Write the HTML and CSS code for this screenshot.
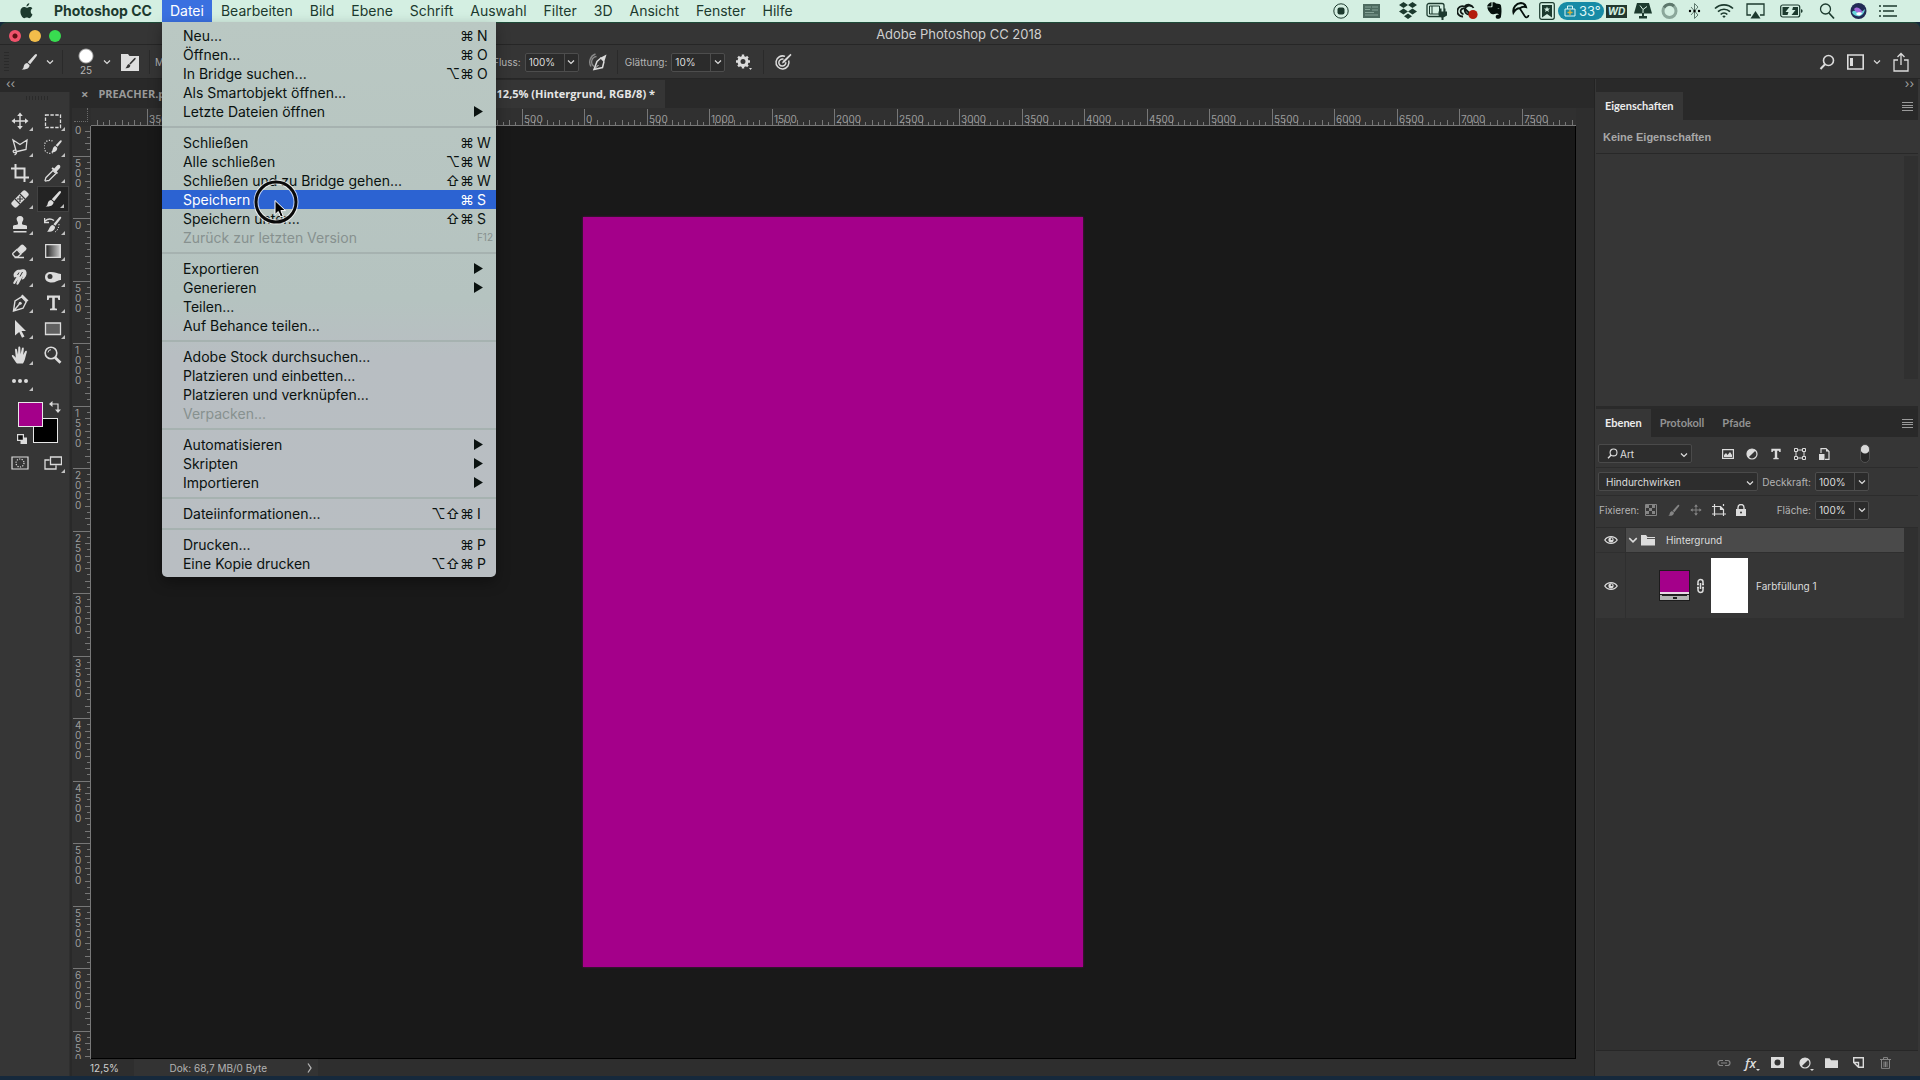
FILE: index.html
```html
<!DOCTYPE html>
<html lang="de">
<head>
    <meta charset="UTF-8">
    <meta name="viewport" content="width=device-width, initial-scale=1.0">
    <title>Adobe Photoshop CC 2018</title>
    <link rel="stylesheet" href="styles.css">
</head>
<body>
    <svg class="sprite" aria-hidden="true">
        <symbol id="chevron" viewBox="0 0 8 6"><path d="M1 1.5l3 3 3-3" fill="none" stroke="currentColor" stroke-width="1.2"/></symbol>
        <symbol id="brush" viewBox="0 0 18 18"><path d="M16.6 1.2c.7.6.4 1.4-.1 2.1l-6.300 8-2.400-2 6.900-7.500c.6-.6 1.300-1.100 1.900-.6zM7.200 10l2.300 1.900c.3 2.200-1.600 4.900-7.900 4.500 2.200-1 1.700-2 2.400-4 .5-1.500 1.800-2.400 3.200-2.400z" fill="currentColor"/></symbol>
        <symbol id="move" viewBox="0 0 18 18"><path d="M9 2v14M2 9h14" stroke="currentColor" stroke-width="1.4"/><path d="M9 .5l2.800 3.500H6.200zM9 17.500L6.200 14h5.600zM.5 9L4 6.200v5.600zM17.500 9L14 11.800V6.200z" fill="currentColor"/></symbol>
        <symbol id="eye" viewBox="0 0 14 10"><path d="M.8 5C3.500.6 10.500.6 13.200 5 10.500 9.400 3.500 9.400.8 5z" fill="none" stroke="currentColor" stroke-width="1.300"/><circle cx="7" cy="4.800" r="2.600" fill="currentColor"/><circle cx="7.600" cy="4.200" r=".9" fill="#333"/></symbol>
        <symbol id="folder" viewBox="0 0 14 12"><path d="M0 1h5l1.500 2H14v8.500H0z" fill="currentColor"/></symbol>
        <symbol id="menu" viewBox="0 0 11 9"><path d="M0 .5h11M0 3.500h11M0 5.500h11M0 8.500h11" stroke="currentColor"/></symbol>
        <symbol id="glass" viewBox="0 0 16 16"><circle cx="9.500" cy="6.500" r="5" fill="none" stroke="currentColor" stroke-width="1.600"/><path d="M6 10.200L1.500 15" stroke="currentColor" stroke-width="2"/></symbol>
        <symbol id="adjust" viewBox="0 0 12 12"><circle cx="6" cy="6" r="5" fill="none" stroke="currentColor" stroke-width="1.200"/><path d="M9.600 2.400A5 5 0 0 0 2.400 9.600z" fill="currentColor"/></symbol>
    </svg>

    <nav class="menubar">
        <a href="#" class="apple" aria-label="Apple"><svg width="13" height="16" viewBox="0 0 13 16"><path d="M9.300.3c.1 1.500-1.300 3.200-2.800 3.100C6.300 2 7.700.5 9.300.3zM12.500 11.600c-.7 1.700-1.900 3.600-3.200 3.600-1 0-1.300-.6-2.500-.6s-1.600.6-2.500.6C2.500 15.200.4 11.900.4 8.600c0-2.900 1.800-4.500 3.600-4.500 1.100 0 2 .7 2.700.7.700 0 1.800-.8 3.200-.8 1 0 1.900.5 2.500 1.300-2.400 1.500-2 5 .1 6.300z" fill="currentColor"/></svg></a>
        <a href="#" class="app-name">Photoshop CC</a>
        <div class="menu-wrap">
            <a href="#" class="active">Datei</a>
            <ul class="dropdown">
                <li><a href="#">Neu...<kbd>⌘<b>N</b></kbd></a></li>
                <li><a href="#">Öffnen...<kbd>⌘<b>O</b></kbd></a></li>
                <li><a href="#">In Bridge suchen...<kbd>⌥⌘<b>O</b></kbd></a></li>
                <li><a href="#">Als Smartobjekt öffnen...</a></li>
                <li><a href="#" class="more">Letzte Dateien öffnen</a></li>
                <li class="line"></li>
                <li><a href="#">Schließen<kbd>⌘<b>W</b></kbd></a></li>
                <li><a href="#">Alle schließen<kbd>⌥⌘<b>W</b></kbd></a></li>
                <li><a href="#">Schließen und zu Bridge gehen...<kbd>⇧⌘<b>W</b></kbd></a></li>
                <li><a href="#" class="hover">Speichern<kbd>⌘<b>S</b></kbd></a></li>
                <li><a href="#">Speichern unter...<kbd>⇧⌘<b>S</b></kbd></a></li>
                <li><a href="#" class="off">Zurück zur letzten Version<kbd><b class="fkey">F12</b></kbd></a></li>
                <li class="line"></li>
                <li><a href="#" class="more">Exportieren</a></li>
                <li><a href="#" class="more">Generieren</a></li>
                <li><a href="#">Teilen...</a></li>
                <li><a href="#">Auf Behance teilen...</a></li>
                <li class="line"></li>
                <li><a href="#">Adobe Stock durchsuchen...</a></li>
                <li><a href="#">Platzieren und einbetten...</a></li>
                <li><a href="#">Platzieren und verknüpfen...</a></li>
                <li><a href="#" class="off">Verpacken...</a></li>
                <li class="line"></li>
                <li><a href="#" class="more">Automatisieren</a></li>
                <li><a href="#" class="more">Skripten</a></li>
                <li><a href="#" class="more">Importieren</a></li>
                <li class="line"></li>
                <li><a href="#">Dateiinformationen...<kbd>⌥⇧⌘<b>I</b></kbd></a></li>
                <li class="line"></li>
                <li><a href="#">Drucken...<kbd>⌘<b>P</b></kbd></a></li>
                <li><a href="#">Eine Kopie drucken<kbd>⌥⇧⌘<b>P</b></kbd></a></li>
            </ul>
            <svg class="cursor" width="46" height="46" viewBox="0 0 46 46"><circle cx="23" cy="23" r="20" fill="none" stroke="#fff" stroke-opacity=".7" stroke-width="5"/><circle cx="23" cy="23" r="20" fill="none" stroke="#0a0a0a" stroke-width="3"/><path d="M22 21.500v14l3.300-3 2.300 5.500 2.600-1.100-2.300-5.300h4.600z" fill="#000" stroke="#fff" stroke-width="1"/></svg>
        </div>
        <a href="#">Bearbeiten</a>
        <a href="#">Bild</a>
        <a href="#">Ebene</a>
        <a href="#">Schrift</a>
        <a href="#">Auswahl</a>
        <a href="#">Filter</a>
        <a href="#">3D</a>
        <a href="#">Ansicht</a>
        <a href="#">Fenster</a>
        <a href="#">Hilfe</a>
        <div class="status-icons">
            <svg width="16" height="16" viewBox="0 0 16 16"><circle cx="8" cy="8" r="7.200" fill="none" stroke="currentColor"/><rect x="4.500" y="4.500" width="7" height="7" rx="2" fill="currentColor"/></svg>
            <svg width="17" height="16" viewBox="0 0 17 16"><path d="M0 1h17v14H0z" fill="#4d6b60"/><path d="M2 4h6M2 6.500h5M9 4h6M9 7h6M2 9.500h9M2 12h13" stroke="#86a498" stroke-width="1"/></svg>
            <svg width="20" height="18" viewBox="0 0 20 18"><path d="M5.500 0L10 3 5.500 6 1 3zM14.500 0L19 3l-4.500 3L10 3zM5.500 6.400L10 9.400l-4.500 3L1 9.400zM14.500 6.400L19 9.400l-4.500 3-4.500-3zM10 11.500l4 2.700-4 2.800-4-2.800z" fill="currentColor"/></svg>
            <svg width="22" height="18" viewBox="0 0 22 18"><rect x="1" y="1.500" width="17" height="13" rx="2" fill="none" stroke="currentColor" stroke-width="1.300"/><path d="M3.500 4h10v8h-10zM6 4v8" fill="none" stroke="currentColor"/><path d="M14 6.500v3h-1.500v4l3 2v2.500h2v-2.500l3.500-2v-4h-1.500v-3h-1.500v3h-2.500v-3z" fill="currentColor"/></svg>
            <svg width="22" height="18" viewBox="0 0 22 18"><path d="M6 14.500a5.200 5.200 0 1 1 1.500-10A5.500 5.500 0 0 1 16.500 6M6.500 12a2.800 2.800 0 1 1 1.700-5l5 5M13 12.500a4.500 4.500 0 1 1 2-8" fill="none" stroke="#101a16" stroke-width="1.800"/><circle cx="16" cy="12.500" r="4.600" fill="#b31d0c"/></svg>
            <svg width="15" height="18" viewBox="0 0 15 18"><path d="M4.500 0v3.500c0 .7-.4 1-1 1H0C.5 2.500 2.500.5 4.500 0zM5.500.2c2 0 3 .4 3.500 1.300 2.500.2 4.600.2 5 2 .8 4 .6 8-.1 11.500-.4 2.200-3.900 2-4.700 1.200-1-1.200-.5-3.300 1-3.400h1.500c0-1.300-1.300-.8-2.700-1.200-.7.8-4.600.8-5.500-.4C2 9.500.4 7.500.3 5.300h4.200c.8 0 1-.5 1-1zM10.500 6.500c.6-.6 1.500-.5 2 .2-.8-.1-1.300-.2-2-.2z" fill="#05100c" fill-rule="evenodd"/></svg>
            <svg width="18" height="18" viewBox="0 0 18 18"><path d="M1.500 10.500C.5 5.500 4 1.500 9 1c3 .2 4.500 1.800 5 4-2.500-.8-4.500-.2-6 1.200C5.500 6 3.200 7.500 1.500 10.500z" fill="none" stroke="#05100c" stroke-width="2"/><path d="M7.500 6l5.500 8.500c1 1.500 3.500 1 3.500-1.500" fill="none" stroke="#05100c" stroke-width="1.700"/></svg>
            <svg width="16" height="18" viewBox="0 0 16 18"><rect x=".7" y=".7" width="14.600" height="16.600" rx="2" fill="none" stroke="currentColor" stroke-width="1.200"/><path d="M3 3h10v12.500L8 12l-5 3.500z" fill="currentColor"/><path d="M8 4.500l.8 2 2.200.1-1.700 1.300.6 2.100L8 8.800 6.100 10l.6-2.100L5 6.600l2.200-.1z" fill="#d4efe2"/></svg>
            <span class="temp"><svg width="12" height="12" viewBox="0 0 12 12"><path d="M1 4h10v7H1zM3.500 4V1h5v3" fill="none" stroke="#d9f4f4"/><path d="M6 5v5M3.500 7.500h5" stroke="#d9b13c" stroke-width="1.300"/></svg>33°</span>
            <span class="wd">WD</span>
            <svg width="18" height="16" viewBox="0 0 18 16"><path d="M3 0h12l3 10.500H0z" fill="currentColor"/><path d="M8 10h2v3h3v2.500H5V13h3z" fill="currentColor"/><path d="M6 2.500l3 4 4-3M9 6.500V10" fill="none" stroke="#d4efe2"/></svg>
            <svg width="17" height="18" viewBox="0 0 17 18"><circle cx="8.500" cy="9" r="6.500" fill="none" stroke="#8ba79b" stroke-width="3"/><path d="M3 5.500A6.500 6.500 0 0 1 13 4" fill="none" stroke="#5d776c" stroke-width="3"/></svg>
            <svg width="13" height="18" viewBox="0 0 13 18"><path d="M3 5l7 8-3.500 3.500v-15L10 5l-7 8" fill="none" stroke="#5f7a6f"/><circle cx="2" cy="9" r="1.200"/><circle cx="6.500" cy="9" r="1.200"/><circle cx="11" cy="9" r="1.200"/></svg>
            <svg width="20" height="16" viewBox="0 0 20 16"><path d="M1 5.500a13 13 0 0 1 18 0M4 8.700a8.600 8.600 0 0 1 12 0M6.700 11.500a4.700 4.700 0 0 1 6.600 0" fill="none" stroke="currentColor" stroke-width="1.700"/><path d="M8.300 13.200a2.500 2.500 0 0 1 3.400 0L10 15z" fill="currentColor"/></svg>
            <svg width="19" height="16" viewBox="0 0 19 16"><path d="M5 12H1V1h17v11h-4" fill="none" stroke="currentColor" stroke-width="1.300"/><path d="M9.500 8l5 7.500h-10z" fill="currentColor"/></svg>
            <svg width="23" height="16" viewBox="0 0 23 16"><rect x=".7" y="2" width="19" height="12" rx="2" fill="none" stroke="currentColor" stroke-width="1.200"/><path d="M2.500 4h7L5.500 9h3l-1 3h-5zM13 4h5v8h-6.500l4-5h-3.300z" fill="currentColor"/><path d="M21 6v4l1.500-1V7z" fill="currentColor"/></svg>
            <svg width="16" height="18" viewBox="0 0 16 18"><circle cx="6.500" cy="7" r="5" fill="none" stroke="currentColor" stroke-width="1.300"/><path d="M10 11l5 5.500" stroke="currentColor" stroke-width="1.700"/></svg>
            <svg width="17" height="18" viewBox="0 0 17 18"><circle cx="8.500" cy="9" r="8" fill="#222a55"/><path d="M2 10c3-4 8 3 13-3-1 6-5 8-8 7-3-.5-4.500-2-5-4z" fill="#66d6dc"/><path d="M4 7c4-4 7 1 9 3-4 2-7 1-9-3z" fill="#a26ad8"/><path d="M6 12c3-3 5-1 6-1-1 3-4 3-6 1z" fill="#fff"/></svg>
            <svg width="18" height="16" viewBox="0 0 18 16"><path d="M0 3h2M4 3h14M0 8h2M4 8h11M0 13h2M4 13h14" stroke="currentColor" stroke-width="1.700"/></svg>
        </div>
    </nav>

    <header class="titlebar">
        <div class="lights"><button class="red" aria-label="Schließen"></button><button class="yellow" aria-label="Minimieren"></button><button class="green" aria-label="Zoomen"></button></div>
        <h1>Adobe Photoshop CC 2018</h1>
    </header>

    <div class="options">
        <div class="options-left">
            <span class="grip"></span>
            <button class="opt-brush" aria-label="Pinsel"><svg width="18" height="18"><use href="#brush"/></svg><svg class="chev" width="8" height="6"><use href="#chevron"/></svg></button>
            <button class="opt-size" aria-label="Pinselgröße"><span class="preview"><i></i>25</span><svg class="chev" width="8" height="6"><use href="#chevron"/></svg></button>
            <button class="opt-panel" aria-label="Pinselbedienfeld"><svg width="18" height="18" viewBox="0 0 18 18"><path d="M0 1h7l1.500 2H18v15H0z" fill="#dedede"/><path d="M14.500 5c.5.5 0 1.200-.4 1.700L9.500 11.500l-1.200-1L13.200 5.300c.4-.4.900-.7 1.300-.3zM8 11l1.300 1.200c0 2-1.700 3.300-5 3 2-1.200 1.500-3.600 3.700-4.200z" fill="#333"/></svg></button>
            <span class="mode">M</span>
        </div>
        <div class="options-mid">
            <label for="flow">Fluss:</label>
            <span class="field"><input id="flow" type="text" value="100%"><button aria-label="Fluss wählen"><svg width="8" height="6"><use href="#chevron"/></svg></button></span>
            <button class="opt-icon" aria-label="Airbrush"><svg width="18" height="18" viewBox="0 0 18 18"><path d="M7.500 3.500a5.500 5.500 0 0 0-2.500 10M6.500 1A8.500 8.500 0 0 0 2 13.500" fill="none" stroke="#8a8a8a" stroke-width="1.400"/><path d="M12.500 4.500L8 8.500l-3 8 8.500-2 1.500-6" fill="none" stroke="currentColor" stroke-width="1.500"/><path d="M5 16.500l4.500-4.500" stroke="currentColor"/><path d="M17.500 1.500L11 5l4 4.500z" fill="currentColor"/></svg></button>
            <span class="split"></span>
            <label class="smooth-label" for="smooth">Glättung:</label>
            <span class="field"><input id="smooth" type="text" value="10%"><button aria-label="Glättung wählen"><svg width="8" height="6"><use href="#chevron"/></svg></button></span>
            <button class="opt-icon" aria-label="Glättungsoptionen"><svg width="18" height="18" viewBox="0 0 18 18"><circle cx="8" cy="8.500" r="4" fill="none" stroke="currentColor" stroke-width="3"/><path d="M8 1.500v3M8 12.500v3M1 8.500h3M12 8.500h3M3.100 3.600l2 2M10.900 11.400l2 2M3.100 13.400l2-2M10.900 5.600l2-2" stroke="currentColor" stroke-width="2.400"/><path d="M14 15h3l-1.500 2z" fill="currentColor"/></svg></button>
            <span class="split"></span>
            <button class="opt-icon" aria-label="Symmetrie"><svg width="18" height="18" viewBox="0 0 18 18"><path d="M11 3.400a6.500 6.500 0 1 0 3.700 4" fill="none" stroke="currentColor" stroke-width="1.500"/><path d="M9.500 6.300a3.500 3.500 0 1 0 2.300 3" fill="none" stroke="currentColor" stroke-width="1.500"/><path d="M16.500.8l1 1.200-7 7.500-2.500 1 .8-2.500z" fill="currentColor"/></svg></button>
        </div>
        <div class="options-right">
            <button aria-label="Suchen"><svg width="16" height="16"><use href="#glass"/></svg></button>
            <button aria-label="Arbeitsbereich"><svg width="17" height="16" viewBox="0 0 17 16"><path d="M.8 1h15.400v14H.8z" fill="none" stroke="currentColor" stroke-width="1.600"/><path d="M3 4h3v8H3z" fill="currentColor"/></svg><svg class="chev" width="8" height="6"><use href="#chevron"/></svg></button>
            <button aria-label="Teilen"><svg width="17" height="20" viewBox="0 0 17 20"><path d="M5 8H1v11h14V8h-4M8 13V2M4.500 5L8 1.500 11.500 5" fill="none" stroke="currentColor" stroke-width="1.300"/></svg></button>
        </div>
    </div>

    <main class="workspace">
        <aside class="toolbar">
            <div class="collapse">‹‹</div>
            <div class="toolbox">
                <div class="handle"></div>
                <div class="tools">
                    <button aria-label="Verschieben"><svg><use href="#move"/></svg></button>
                    <button aria-label="Auswahlrechteck"><svg viewBox="0 0 18 18"><path d="M1.500 3h15v12.500h-15z" fill="none" stroke="currentColor" stroke-width="1.300" stroke-dasharray="3.400 1.500"/></svg></button>
                    <button aria-label="Lasso"><svg viewBox="0 0 18 18"><path d="M5 12.500L2 2l7 4.500 7-4.500-1 9.500-9 2M5 12.500c-2-.8-3.500.2-2.500 1.500 1 1.200 3.800.3 2.500-1.500zM5 13.500c1 1.200.5 2.500-1.500 3.500" fill="none" stroke="currentColor" stroke-width="1.300"/></svg></button>
                    <button aria-label="Schnellauswahl"><svg viewBox="0 0 18 18"><path d="M9 14.500C5 17 0 14 0 9s4-8 8.500-6" fill="none" stroke="currentColor" stroke-width="1.200" stroke-dasharray="1.200 1.500"/><path d="M17.500 2.500c.5.700 0 1.500-.5 2l-3.500 4.200-1.800-1.500 4-4.300c.6-.6 1.300-.9 1.800-.4zM11.200 8l2 1.700c.3 2.500-1.800 5-6.200 4.500C9.500 12.500 8 9 11.200 8z" fill="currentColor"/></svg></button>
                    <button aria-label="Freistellen"><svg viewBox="0 0 18 18"><path d="M4.500 0v13.500H18M0 4.500h13.500V18" fill="none" stroke="currentColor" stroke-width="2"/></svg></button>
                    <button aria-label="Pipette"><svg viewBox="0 0 18 18"><path d="M9 6.500l3 3-7 7c-1 .5-2-.2-3 .5-.8.300-1.200-.6-.8-1.200.7-1 .1-1.500.8-2.300z" fill="none" stroke="currentColor" stroke-width="1.300"/><path d="M7.500 4.500l1.200-1.200 1.500 1.300 2.800-3c2-2 4.500.4 2.700 2.600l-3 3.200 1.400 1.500-1.300 1.200z" fill="currentColor"/></svg></button>
                    <button aria-label="Reparaturpinsel"><svg viewBox="0 0 18 18"><path d="M12 .8c1-1 2-.8 3 .2l2 2c1 1 1 2 0 3L6 17c-1 1-2 1-3 0l-2-2c-1-1-1-2 0-3z" fill="currentColor"/><path d="M9 4l5 5M4 9l5 5M9 6v6M6 9h6" stroke="#363636" stroke-width="1.200"/></svg></button>
                    <button class="selected" aria-label="Pinsel"><svg><use href="#brush"/></svg></button>
                    <button aria-label="Kopierstempel"><svg viewBox="0 0 18 18"><path d="M9 0c2.500 0 3.800 1.800 3.300 3.700-.4 1.500-1.300 2-1.300 4.300 0 1 4 .8 5 2v3H2v-3c1-1.200 5-1 5-2 0-2.300-.9-2.800-1.300-4.300C5.200 1.800 6.500 0 9 0zM2.500 15h13v1.500h-13z" fill="currentColor"/></svg></button>
                    <button aria-label="Protokollpinsel"><svg viewBox="0 0 18 18"><path d="M17 1c.6.600 0 1.400-.4 2l-5.200 6.800-2-1.600L15 1.600c.6-.6 1.300-1.200 2-.6zM9 9l2 1.700c.2 3-2.500 5.500-8 5C5.500 14 5 9.500 9 9z" fill="currentColor"/><path d="M1 5c3-2.500 6-2.500 9-.5M.5 2v4.500H5" fill="none" stroke="currentColor" stroke-width="1.500"/><path d="M15 8c0 4-2 7-4 8" fill="none" stroke="currentColor" stroke-dasharray="1.200 1.500"/></svg></button>
                    <button aria-label="Radiergummi"><svg viewBox="0 0 18 18"><path d="M9.500 3.500c1-1 2-1.500 3-.5l2.500 2.500c1 1 .5 2-.5 3L10.500 12 6 7z" fill="currentColor"/><path d="M6 7.500l4 4.500-3.500 3H4l-2-2.300c-.5-.6-.4-1.200.2-1.800zM3.500 15.500H13" fill="none" stroke="currentColor" stroke-width="1.300"/></svg></button>
                    <button aria-label="Verlauf"><svg viewBox="0 0 18 18"><defs><linearGradient id="grad"><stop offset="0" stop-color="#222"/><stop offset="1" stop-color="#ccc"/></linearGradient></defs><path d="M1.700 2.700h14.600v12.600H1.700z" fill="url(#grad)" stroke="currentColor" stroke-width="1.300"/></svg></button>
                    <button aria-label="Wischfinger"><svg viewBox="0 0 18 18"><path d="M2.500 7C3 3.500 6 1.500 9 1.800c2-1 5-.6 6 .9 1.200 2.500.5 5-1.200 7-.8 1.500-2 2-3 1.500L12 8l-4.500 8c-.8 1.300-2.500.6-2-.8l1.300-3.700-2.600 4c-1 1.200-2.500.2-1.800-1.200L5.500 9 3 9.500z" fill="currentColor"/><path d="M8 4.500L6.500 7M11.500 4L9 8.500" stroke="#363636"/></svg></button>
                    <button aria-label="Schwamm"><svg viewBox="0 0 18 18"><path d="M1 9c0-3 2-5 6-5s6 1.500 10 2v6c-3-.5-5 2.500-9 2.500-5 0-7-2.500-7-5.500z" fill="currentColor"/><circle cx="6" cy="8.500" r="2.500" fill="#363636"/></svg></button>
                    <button aria-label="Zeichenstift"><svg viewBox="0 0 18 18"><path d="M10.500 2.800l4.700 5-3.200 6.400L2.500 17 4 6.800zM3 16.500L8.500 10" fill="none" stroke="currentColor" stroke-width="1.400"/><circle cx="9.200" cy="9.300" r="1.500" fill="currentColor"/><path d="M11.500.5l6 6-2 1.500-5.500-6z" fill="currentColor"/></svg></button>
                    <button aria-label="Text"><svg viewBox="0 0 18 18"><path d="M3 1.500h13V6h-1.600l-.7-2.300h-2.900v10.500l2.200.6v1.500H6v-1.500l2.200-.6V3.700H5.300L4.600 6H3z" fill="currentColor"/></svg></button>
                    <button aria-label="Pfadauswahl"><svg viewBox="0 0 18 18"><path d="M4 0l11 11h-4.500l3 5.500-2.500 1.200-2.800-5.700L4 15.500z" fill="currentColor"/></svg></button>
                    <button aria-label="Rechteck"><svg viewBox="0 0 18 18"><path d="M1.500 3h15v11.500h-15z" fill="#606060" stroke="currentColor" stroke-width="1.300"/></svg></button>
                    <button aria-label="Hand"><svg viewBox="0 0 18 18"><path d="M5 16.500L1 10.500c-.8-1.500 1-2 2-.8l1.800 2L4 3.800c0-1.500 1.600-1.500 1.900-.2L7 8.500l.3-7c.1-1.500 1.900-1.500 2 0l.3 6.800 1.300-6c.4-1.400 2-1 1.900.4L12.200 9l1.800-3.500c.7-1.200 2.200-.6 1.800.7-.8 2.600-1.300 4.500-1.700 6.300-.4 2-1.100 3.200-2.100 5H6z" fill="currentColor"/></svg></button>
                    <button class="plain" aria-label="Zoom"><svg viewBox="0 0 18 18"><circle cx="7" cy="7" r="5.800" fill="none" stroke="currentColor" stroke-width="1.600"/><path d="M4 6.500a3 3 0 0 1 3-2.800" fill="none" stroke="currentColor"/><path d="M11 11.500l5.500 5.200" stroke="currentColor" stroke-width="2.800"/></svg></button>
                    <button aria-label="Symbolleiste bearbeiten"><svg viewBox="0 0 18 18"><circle cx="3" cy="9" r="2" fill="currentColor"/><circle cx="9" cy="9" r="2" fill="currentColor"/><circle cx="15" cy="9" r="2" fill="currentColor"/></svg></button>
                </div>
                <div class="colors">
                    <button class="bg" aria-label="Hintergrundfarbe"></button>
                    <button class="fg" aria-label="Vordergrundfarbe"></button>
                    <button class="swap" aria-label="Farben tauschen"><svg width="12" height="12" viewBox="0 0 12 12"><path d="M2 3h7v7" fill="none" stroke="currentColor" stroke-width="1.200"/><path d="M0 3l3.500-3v6zM9 12L6 8.500h6z" fill="currentColor"/></svg></button>
                    <button class="reset" aria-label="Standardfarben"><svg width="10" height="10" viewBox="0 0 10 10"><path d="M3.500 3.500H10V10H3.500z" fill="#ddd"/><path d="M.6.600h5.800v5.800H.6z" fill="#111" stroke="#ddd" stroke-width="1.200"/></svg></button>
                </div>
                <div class="tools modes">
                    <button class="plain" aria-label="Maskierungsmodus"><svg viewBox="0 0 18 18"><path d="M1 3h16v12H1z" fill="none" stroke="currentColor" stroke-width="1.200"/><circle cx="9" cy="9" r="4" fill="none" stroke="currentColor" stroke-width="1.200" stroke-dasharray="1.200 1.300"/></svg></button>
                    <button aria-label="Bildschirmmodus"><svg viewBox="0 0 18 18"><path d="M6.500 3h11v7.500h-11zM5.500 6H1v9h11v-3.500" fill="none" stroke="currentColor" stroke-width="1.300"/></svg></button>
                </div>
            </div>
        </aside>

        <section class="document">
            <div class="tabs">
                <div class="tab first"><button aria-label="Tab schließen">×</button><a href="#">PREACHER.psd</a></div>
                <div class="tab current"><a href="#">12,5% (Hintergrund, RGB/8) *</a></div>
            </div>
            <div class="view">
                <div class="corner"></div>
                <svg class="ruler-h" id="ruler-h"></svg>
                <svg class="ruler-v" id="ruler-v"></svg>
                <div class="canvas" id="canvas"><div class="artboard" id="artboard"></div></div>
            </div>
            <footer class="statusbar">
                <span class="zoom">12,5%</span>
                <button class="doc-info"><span>Dok: 68,7 MB/0 Byte</span><svg width="6" height="10" viewBox="0 0 6 10"><path d="M1 .5L4 5 1 9.500" fill="none" stroke="currentColor" stroke-width="1.300"/></svg></button>
            </footer>
        </section>

        <aside class="panels">
            <div class="collapse">››</div>
            <div class="panel-tabs">
                <a href="#" class="on">Eigenschaften</a>
                <button aria-label="Bedienfeldmenü"><svg width="11" height="9"><use href="#menu"/></svg></button>
            </div>
            <p class="empty">Keine Eigenschaften</p>
            <div class="properties"><div class="scroll"></div></div>

            <div class="panel-tabs layers-tabs">
                <a href="#" class="on">Ebenen</a>
                <a href="#">Protokoll</a>
                <a href="#">Pfade</a>
                <button aria-label="Bedienfeldmenü"><svg width="11" height="9"><use href="#menu"/></svg></button>
            </div>
            <div class="row">
                <span class="select kind"><svg width="11" height="11" viewBox="0 0 16 16"><use href="#glass"/></svg><select aria-label="Filtertyp"><option>Art</option></select><svg class="chev" width="8" height="6"><use href="#chevron"/></svg></span>
                <div class="filters">
                    <button aria-label="Pixelebenen"><svg width="12" height="12" viewBox="0 0 12 12"><path d="M.6 1.600h10.800v8.800H.6z" fill="none" stroke="currentColor" stroke-width="1.200"/><path d="M2 9V7l2-2 1.500 2L8 4l2 3v2z" fill="currentColor"/></svg></button>
                    <button aria-label="Einstellungsebenen"><svg width="12" height="12"><use href="#adjust"/></svg></button>
                    <button aria-label="Textebenen"><svg width="12" height="12" viewBox="0 0 18 18"><path d="M2 1h14v5h-2l-.7-2h-2.500v10.500l2.200.5v2H5v-2l2.200-.5V4H4.700L4 6H2z" fill="currentColor"/></svg></button>
                    <button aria-label="Formebenen"><svg width="12" height="12" viewBox="0 0 12 12"><path d="M2 2h8v8H2z" fill="none" stroke="currentColor"/><path d="M.5.5h3v3h-3zM8.500.5h3v3h-3zM.5 8.500h3v3h-3zM8.500 8.500h3v3h-3z" fill="#363636" stroke="currentColor"/></svg></button>
                    <button aria-label="Smartobjekte"><svg width="12" height="12" viewBox="0 0 12 12"><path d="M3 5V.6h5l3 3v7.800H7" fill="none" stroke="currentColor" stroke-width="1.200"/><path d="M1 6h5.500v6H1z M8 .6v3h3z" fill="currentColor"/></svg></button>
                </div>
                <label class="toggle"><input type="checkbox" checked aria-label="Filter ein oder aus"></label>
            </div>
            <div class="row">
                <span class="select blend"><select aria-label="Füllmethode"><option>Hindurchwirken</option></select><svg class="chev" width="8" height="6"><use href="#chevron"/></svg></span>
                <label class="right" for="opacity">Deckkraft:</label>
                <span class="field"><input id="opacity" type="text" value="100%"><button aria-label="Deckkraft wählen"><svg width="8" height="6"><use href="#chevron"/></svg></button></span>
            </div>
            <div class="row locks">
                <span>Fixieren:</span>
                <button class="dim" aria-label="Transparente Pixel fixieren"><svg width="12" height="12" viewBox="0 0 12 12"><path d="M.5.500h11v11H.5z" fill="none" stroke="currentColor"/><path d="M1 1h3v3H1zM7 1h3v3H7zM4 4h3v3H4zM1 7h3v3H1zM7 7h3v3H7z" fill="currentColor"/></svg></button>
                <button class="dim" aria-label="Bildpixel fixieren"><svg width="13" height="13"><use href="#brush"/></svg></button>
                <button class="dim" aria-label="Position fixieren"><svg width="12" height="12"><use href="#move"/></svg></button>
                <button aria-label="Verschachtelung verhindern"><svg width="14" height="12" viewBox="0 0 14 12"><path d="M2.500 0v12M0 2.500h8.500l3 3V12M0 10h14M8.500 2.500v3h3M11.500 0v2" fill="none" stroke="currentColor" stroke-width="1.200"/></svg></button>
                <button aria-label="Alle sperren"><svg width="10" height="12" viewBox="0 0 10 12"><path d="M0 5h10v7H0z" fill="currentColor"/><path d="M2 5V3.500a3 3 0 0 1 6 0V5" fill="none" stroke="currentColor" stroke-width="1.400"/><circle cx="5" cy="8.500" r="1" fill="#333"/></svg></button>
                <label class="right" for="fill">Fläche:</label>
                <span class="field"><input id="fill" type="text" value="100%"><button aria-label="Fläche wählen"><svg width="8" height="6"><use href="#chevron"/></svg></button></span>
            </div>
            <ul class="layers">
                <li class="layer group">
                    <button class="eye" aria-label="Sichtbarkeit"><svg width="14" height="10"><use href="#eye"/></svg></button>
                    <div class="layer-body"><svg class="open" width="10" height="8" viewBox="0 0 8 6"><use href="#chevron"/></svg><svg width="14" height="12"><use href="#folder"/><path d="M6 4.500h8" stroke="#555"/></svg><span>Hintergrund</span></div>
                </li>
                <li class="layer fill">
                    <button class="eye" aria-label="Sichtbarkeit"><svg width="14" height="10"><use href="#eye"/></svg></button>
                    <div class="layer-body"><span class="thumb"><i></i></span><svg width="9" height="16" viewBox="0 0 9 16"><path d="M2 6.500V4a2.500 2.500 0 0 1 5 0v2.500M2 9.500V12a2.500 2.500 0 0 0 5 0V9.500M1 6.500h2M6 6.500h2M1 9.500h2M6 9.500h2M4.500 5v6" fill="none" stroke="currentColor" stroke-width="1.500"/></svg><span class="mask"></span><span>Farbfüllung 1</span></div>
                </li>
            </ul>
            <div class="panel-foot">
                <button class="dim" aria-label="Ebenen verbinden"><svg width="14" height="8" viewBox="0 0 14 8"><path d="M6 6.500H3.500a2.500 2.500 0 0 1 0-5H6M8 1.500h2.500a2.500 2.500 0 0 1 0 5H8M4 4h6" fill="none" stroke="currentColor" stroke-width="1.200"/></svg></button>
                <button class="fx" aria-label="Ebenenstil">fx</button>
                <button aria-label="Maske hinzufügen"><svg width="13" height="11" viewBox="0 0 13 11"><path d="M0 0h13v11H0z" fill="currentColor"/><circle cx="6.500" cy="5.500" r="3" fill="#333"/></svg></button>
                <button class="sub" aria-label="Einstellungsebene"><svg width="12" height="12"><use href="#adjust"/></svg></button>
                <button aria-label="Neue Gruppe"><svg width="13" height="12"><use href="#folder"/></svg></button>
                <button aria-label="Neue Ebene"><svg width="11" height="11" viewBox="0 0 11 11"><path d="M.7 5V.7h9.600v9.600H5.500L.7 5.500H5.500v4.800" fill="none" stroke="currentColor" stroke-width="1.400"/></svg></button>
                <button class="dim" aria-label="Löschen"><svg width="11" height="12" viewBox="0 0 11 12"><path d="M0 2.500h11M3.500 2V.6h4V2M1.500 3v8.400h8V3M4 4.500v5.500M5.500 4.500v5.500M7 4.500v5.500" fill="none" stroke="currentColor"/></svg></button>
            </div>
        </aside>
    </main>

    <script src="rulers.js"></script>
</body>
</html>
```
FILE: styles.css
```css
* {
    box-sizing: border-box;
}

body {
    margin: 0;
    height: 100vh;
    display: flex;
    flex-direction: column;
    overflow: hidden;
    background: #16293c;
    color: #b4b4b4;
    font-family: Inter, "Liberation Sans", sans-serif;
    font-size: 10px;
    padding-bottom: 4px;
}

a {
    color: inherit;
    text-decoration: none;
}

ul {
    list-style: none;
    margin: 0;
    padding: 0;
}

button {
    display: flex;
    align-items: center;
    justify-content: center;
    border: none;
    padding: 0;
    background: none;
    color: #dcdcdc;
    font: inherit;
}

input,
select {
    font: inherit;
    color: #dedede;
    border: none;
    background: none;
    padding: 0;
    outline: none;
    appearance: none;
}

svg {
    flex: none;
}

.sprite {
    position: absolute;
    width: 0;
    height: 0;
}

/* macOS menu bar */
.menubar {
    display: flex;
    gap: 1px;
    height: 22px;
    background: #d4efe2;
    color: #1c3a2e;
    font-size: 14px;
    line-height: 22px;
    flex: none;
}

.menubar > a,
.menu-wrap > a {
    display: block;
    padding: 0 8px;
}

.menubar .apple {
    display: flex;
    align-items: center;
    padding: 0 11px 0 20px;
}

.menubar .app-name {
    font-weight: 700;
    padding: 0 9px;
}

.menu-wrap {
    position: relative;
}

.menu-wrap .active {
    background: #3a70e0;
    color: #fff;
}

.dropdown {
    position: absolute;
    top: 22px;
    left: 0;
    z-index: 10;
    width: 334px;
    padding: 4px 0;
    background: linear-gradient(#bac8c3, #b5c3c0 50%, #b8bec2 60%, #b9bec2);
    color: #0a1210;
    border-radius: 0 0 5px 5px;
    line-height: 19px;
    box-shadow: 0 5px 14px rgba(0, 0, 0, 0.35);
}

.dropdown a {
    display: flex;
    height: 19px;
    padding: 0 4px 0 21px;
}

.dropdown .line {
    height: 12px;
    padding-top: 5px;
}

.dropdown .line::before {
    content: "";
    display: block;
    height: 2px;
    background: #a6b2b0;
}

.dropdown .hover {
    background: #2c63d2;
    color: #fff;
}

.dropdown .off {
    color: #87918f;
}

.dropdown kbd {
    display: flex;
    margin-left: auto;
    font-family: Inter, "DejaVu Sans", sans-serif;
    font-size: 14px;
}

.dropdown kbd b {
    width: 15px;
    margin-left: 3px;
    font-weight: 400;
}

.dropdown kbd .fkey {
    font-size: 10px;
}

.dropdown .more::after {
    content: "";
    margin: 4px 9px 0 auto;
    width: 9px;
    height: 11px;
    background: currentColor;
    clip-path: polygon(0 0, 100% 50%, 0 100%);
}

.cursor {
    position: absolute;
    left: 91px;
    top: 179px;
    z-index: 11;
    pointer-events: none;
}

.status-icons {
    display: grid;
    grid-template-columns: 30px 35px 28px 31px 30px 25px 27px 19px 48px 28px 27px 27px 26px 32px 34px 39px 31px 29px 18px;
    align-items: center;
    margin-left: auto;
    margin-right: 23px;
}

.temp {
    display: flex;
    align-items: center;
    gap: 3px;
    width: 46px;
    height: 18px;
    padding-left: 6px;
    border-radius: 9px;
    background: #178ba6;
    color: #dff6f6;
    font-size: 13px;
    line-height: 18px;
}

.wd {
    width: 21px;
    height: 13px;
    background: #22382f;
    color: #d4efe2;
    font-size: 10px;
    font-style: italic;
    font-weight: 700;
    line-height: 13px;
    text-align: center;
}

/* window title */
.titlebar {
    display: flex;
    align-items: center;
    height: 23px;
    flex: none;
    background: #353535;
    border-top: 1px solid #1e4a38;
    border-bottom: 1px solid #262626;
    border-radius: 7px 7px 0 0;
}

.titlebar h1 {
    flex: 1;
    margin: 1px 69px 0 0;
    text-align: center;
    font-size: 13px;
    font-weight: 400;
    line-height: 18px;
    color: #cfcfcf;
}

.lights {
    display: flex;
    gap: 8px;
    width: 67px;
    padding: 4px 0 0 9px;
}

.lights button {
    width: 12px;
    height: 12px;
    border-radius: 50%;
}

.lights .red {
    background: radial-gradient(circle, #5a0f12 2px, #f0526b 3px);
}

.lights .yellow {
    background: #f3bd4a;
}

.lights .green {
    background: #38dc50;
}

/* tool options */
.options {
    display: flex;
    height: 34px;
    padding-top: 1px;
    flex: none;
    background: #353535;
    border-bottom: 1px solid #262626;
}

.options-left,
.options-mid,
.options-right {
    display: flex;
    align-items: center;
}

.options-left {
    width: 493px;
}

.grip {
    width: 5px;
    height: 21px;
    margin: 0 11px 0 4px;
    background: repeating-linear-gradient(#2a2a2a 0 1px, transparent 1px 3px);
}

.opt-brush {
    gap: 8px;
    height: 24px;
    padding-right: 8px;
    border-right: 1px solid #2a2a2a;
}

.opt-size {
    gap: 9px;
    margin-left: 15px;
}

.preview {
    display: flex;
    flex-direction: column;
    align-items: center;
    font-size: 10px;
    line-height: 13px;
    color: #b4b4b4;
}

.preview i {
    width: 16px;
    height: 16px;
    border-radius: 50%;
    background: radial-gradient(circle, #fff 6px, transparent 8px);
}

.opt-panel {
    height: 24px;
    margin-left: 10px;
    padding-right: 10px;
    border-right: 1px solid #2a2a2a;
}

.mode {
    margin-left: 5px;
}

.field {
    display: flex;
    height: 19px;
    border: 1px solid #4d4d4d;
    border-radius: 2px;
    background: #2b2b2b;
}

.field input {
    width: 38px;
    padding-left: 3px;
}

.field button {
    width: 14px;
    border-left: 1px solid #4d4d4d;
}

.options-mid label {
    margin-right: 4px;
}

.options-mid .smooth-label {
    margin-left: 7px;
}

.opt-icon {
    margin: 0 10px;
}

.split {
    width: 1px;
    height: 24px;
    background: #2a2a2a;
}

.options-right {
    gap: 12px;
    margin: 0 10px 0 auto;
}

.options-right button {
    gap: 9px;
}

/* work area */
.workspace {
    display: flex;
    flex: 1;
    min-height: 0;
    background: #2e2e2e;
}

.collapse {
    height: 13px;
    background: #292929;
    color: #a0a0a0;
    font-size: 12px;
    line-height: 10px;
    flex: none;
}

.toolbar {
    display: flex;
    flex-direction: column;
    width: 72px;
    background: #292929;
}

.toolbar .collapse {
    padding-left: 6px;
}

.toolbox {
    flex: 1;
    margin-right: 2px;
    padding-left: 3px;
    background: #363636;
    border-right: 1px solid #2f2f2f;
}

.handle {
    width: 22px;
    height: 4px;
    margin: 4px 0 8px 23px;
    background: repeating-linear-gradient(90deg, #2a2a2a 0 1px, transparent 1px 3px);
}

.tools {
    display: grid;
    grid-template-columns: 34px 32px;
    grid-auto-rows: 26px;
}

.tools button {
    position: relative;
}

.tools svg {
    width: 18px;
    height: 18px;
}

.tools button::after {
    content: "";
    position: absolute;
    right: 4px;
    bottom: 3px;
    border: 2px solid transparent;
    border-right-color: #c0c0c0;
    border-bottom-color: #c0c0c0;
}

.tools .plain::after {
    display: none;
}

.tools .selected {
    background: #232323;
    border: 1px solid #424242;
}

.colors {
    position: relative;
    height: 56px;
}

.colors button {
    position: absolute;
}

.colors .fg,
.colors .bg {
    width: 25px;
    height: 25px;
    border: 1px solid #e8e8e8;
    background: #a4008a;
}

.colors .fg {
    left: 15px;
    top: 8px;
}

.colors .bg {
    left: 30px;
    top: 24px;
    background: #000;
}

.colors .swap {
    left: 46px;
    top: 7px;
}

.colors .reset {
    left: 14px;
    top: 40px;
}

/* document window */
.document {
    display: flex;
    flex-direction: column;
    flex: 1;
    min-width: 0;
    padding-right: 18px;
    border-right: 1px solid #232323;
    background: linear-gradient(#292929 29px, #2e2e2e 29px);
}

.tabs {
    display: flex;
    height: 29px;
    padding-top: 1px;
    font-family: "Open Sans", "Noto Sans", sans-serif;
    font-size: 11px;
    font-weight: 700;
    line-height: 28px;
    flex: none;
}

.tab.first {
    display: flex;
    gap: 10px;
    width: 250px;
    padding-left: 9px;
    color: #9a9a9a;
}

.tab.first button {
    color: #9a9a9a;
    font-size: 13px;
}

.tab.current {
    width: 343px;
    padding-right: 10px;
    text-align: right;
    background: #353535;
    color: #e6e6e6;
}

.view {
    display: grid;
    grid-template-columns: 19px 1fr;
    grid-template-rows: 18px 1fr;
    flex: 1;
    min-height: 0;
}

.corner {
    margin: 0 3px 4px 2px;
    border-right: 1px dotted #6a6a6a;
    border-bottom: 1px dotted #6a6a6a;
}

.ruler-h,
.ruler-v {
    display: block;
    width: 100%;
    height: 100%;
    background: #303030;
    overflow: hidden;
}

.ruler-h text,
.ruler-v text {
    fill: #9c9c9c;
    font-size: 10px;
}

.ruler-h path,
.ruler-v path {
    fill: none;
    stroke: #777;
}

.canvas {
    display: flex;
    align-items: center;
    justify-content: center;
    background: #191919;
    border-right: 1px solid #000;
    border-bottom: 1px solid #000;
}

.artboard {
    width: 500px;
    height: 750px;
    background: #a4008a;
    box-shadow: 0 0 2px #6d0a5c;
}

.statusbar {
    display: flex;
    align-items: center;
    height: 17px;
    flex: none;
}

.zoom {
    width: 62px;
    padding-left: 18px;
    color: #d0d0d0;
}

.doc-info {
    width: 184px;
    height: 17px;
    justify-content: flex-end;
    gap: 40px;
    padding-right: 5px;
    background: #333;
    color: #b4b4b4;
}

/* panels on the right */
.panels {
    display: flex;
    flex-direction: column;
    width: 325px;
    padding: 0 2px 0 1px;
    background: #363636;
}

.panels .collapse {
    padding-right: 4px;
    text-align: right;
}

.panel-tabs {
    display: flex;
    height: 28px;
    padding-right: 5px;
    background: #292929;
    font-family: Lato, "Open Sans", sans-serif;
    font-size: 11px;
    font-weight: 700;
    line-height: 28px;
    color: #929292;
    flex: none;
}

.panel-tabs a {
    padding: 0 9px;
}

.panel-tabs .on {
    background: #363636;
    color: #ececec;
}

.panel-tabs button {
    margin-left: auto;
    color: #9a9a9a;
}

.empty {
    height: 34px;
    margin: 0;
    padding-left: 7px;
    border-bottom: 1px solid #282828;
    font-family: "Liberation Sans", sans-serif;
    font-size: 11px;
    font-weight: 700;
    line-height: 34px;
    color: #a8a8a8;
    flex: none;
}

.properties {
    display: flex;
    justify-content: flex-end;
    height: 255px;
    padding: 2px 0 27px;
    border-bottom: 3px solid #2a2a2a;
    flex: none;
}

.scroll {
    width: 14px;
    background: #303030;
}

.row {
    display: flex;
    align-items: center;
    height: 28px;
    padding: 0 49px 0 2px;
    border-bottom: 1px solid #2c2c2c;
    flex: none;
}

.layers-tabs + .row {
    height: 31px;
    padding: 3px 48px 0 2px;
}

.select {
    position: relative;
    display: flex;
    align-items: center;
    height: 19px;
    padding-left: 8px;
    border: 1px solid #4a4a4a;
    border-radius: 2px;
    background: #2d2d2d;
    color: #dedede;
}

.select select {
    flex: 1;
    padding-left: 2px;
}

.select .chev {
    position: absolute;
    right: 3px;
    top: 7px;
    pointer-events: none;
}

.kind {
    width: 94px;
}

.blend {
    width: 160px;
    padding-left: 5px;
}

.filters {
    display: flex;
    gap: 12px;
    margin-left: 30px;
}

.toggle {
    margin-left: auto;
}

.toggle input {
    display: block;
    width: 10px;
    height: 19px;
    margin: 0;
    border: 1px solid #505050;
    border-radius: 5px;
    background: radial-gradient(circle at 50% 4px, #d8d8d8 4px, #262626 5px);
}

.right {
    margin: 0 4px 0 auto;
}

.locks {
    height: 32px;
    gap: 10px;
    padding-left: 3px;
    padding-bottom: 3px;
}

.locks > span:first-child {
    margin-right: -4px;
}

.locks .right {
    margin-right: -6px;
}

.dim {
    color: #858585;
}

.layers {
    flex: 1;
    background: #303030;
    padding-right: 14px;
}

.layer {
    display: flex;
    background: #363636;
    color: #dcdcdc;
}

.eye {
    width: 30px;
    border-right: 1px solid #2f2f2f;
}

.layer-body {
    display: flex;
    align-items: center;
    flex: 1;
}

.group {
    height: 25px;
    border-bottom: 1px solid #2f2f2f;
}

.group .layer-body {
    gap: 3px;
    padding-left: 2px;
    background: #4a4a4a;
}

.group .layer-body span {
    margin-left: 8px;
}

.fill {
    height: 65px;
}

.fill .layer-body {
    gap: 6px;
    padding-left: 33px;
}

.thumb {
    width: 31px;
    height: 31px;
    border: 1px solid #1c1c1c;
    background: linear-gradient(#a4008a 21px, #e8d8e6 21px 23px, #1c1c1c 23px 24px, #b4b4b4 24px);
}

.thumb i {
    display: block;
    width: 25px;
    height: 4px;
    margin: 24px 0 0 2px;
    border-top: 1px solid #222;
    background: linear-gradient(#222, #222) center / 4px 2px no-repeat;
}

.mask {
    width: 37px;
    height: 55px;
    margin-right: 2px;
    background: #fff;
}

.panel-foot {
    display: flex;
    justify-content: flex-end;
    height: 26px;
    padding: 0 19px 2px 0;
    border-top: 1px solid #272727;
    flex: none;
}

.panel-foot button {
    width: 27px;
}

.panel-foot .fx {
    font-family: "Open Sans", sans-serif;
    font-size: 13px;
    font-style: italic;
    font-weight: 600;
}

.panel-foot .fx,
.panel-foot .sub {
    position: relative;
}

.panel-foot .fx::after,
.panel-foot .sub::after {
    content: "";
    position: absolute;
    right: 4px;
    bottom: 3px;
    border: 2px solid transparent;
    border-top-color: #dcdcdc;
    border-bottom: none;
}
```
FILE: rulers.js
```javascript
const artboard = document.getElementById('artboard');
const DOC_WIDTH = 4000;

function drawRuler(id, horizontal) {
    const ruler = document.getElementById(id);
    const box = ruler.getBoundingClientRect();
    const art = artboard.getBoundingClientRect();
    const origin = horizontal ? art.left - box.left + 1 : art.top - box.top + 1;
    const length = horizontal ? box.width : box.height;
    const depth = horizontal ? box.height : box.width;
    const step = art.width / DOC_WIDTH * 500;
    const edge = depth - 0.5;
    let ticks = horizontal ? `M0 ${edge}H${length}` : `M${edge} 0V${length}`;
    let labels = '';

    for (let i = -Math.ceil(origin / step); i * step + origin < length; i++) {
        const start = origin + i * step;
        for (let j = 0; j < 10; j++) {
            const pos = Math.round(start + j * step / 10) + 0.5;
            const size = j === 0 ? depth - 1 : (j % 2 ? 4 : 6);
            ticks += horizontal ? `M${pos} ${depth}v${-size}` : `M${depth} ${pos}h${-size}`;
        }
        const value = String(Math.abs(i * 500));
        if (horizontal) {
            if (start >= 0) {
                labels += `<text x="${Math.round(start) + 2}" y="15">${value}</text>`;
            }
        } else {
            // digits run downwards, one below the other
            [...value].forEach((digit, n) => {
                const y = Math.round(start) + 11 + n * 10;
                if (y > 5) {
                    labels += `<text x="3" y="${y}">${digit}</text>`;
                }
            });
        }
    }
    ruler.innerHTML = `<path d="${ticks}"/>${labels}`;
}

function drawRulers() {
    drawRuler('ruler-h', true);
    drawRuler('ruler-v', false);
}

window.addEventListener('resize', drawRulers);
drawRulers();
```
